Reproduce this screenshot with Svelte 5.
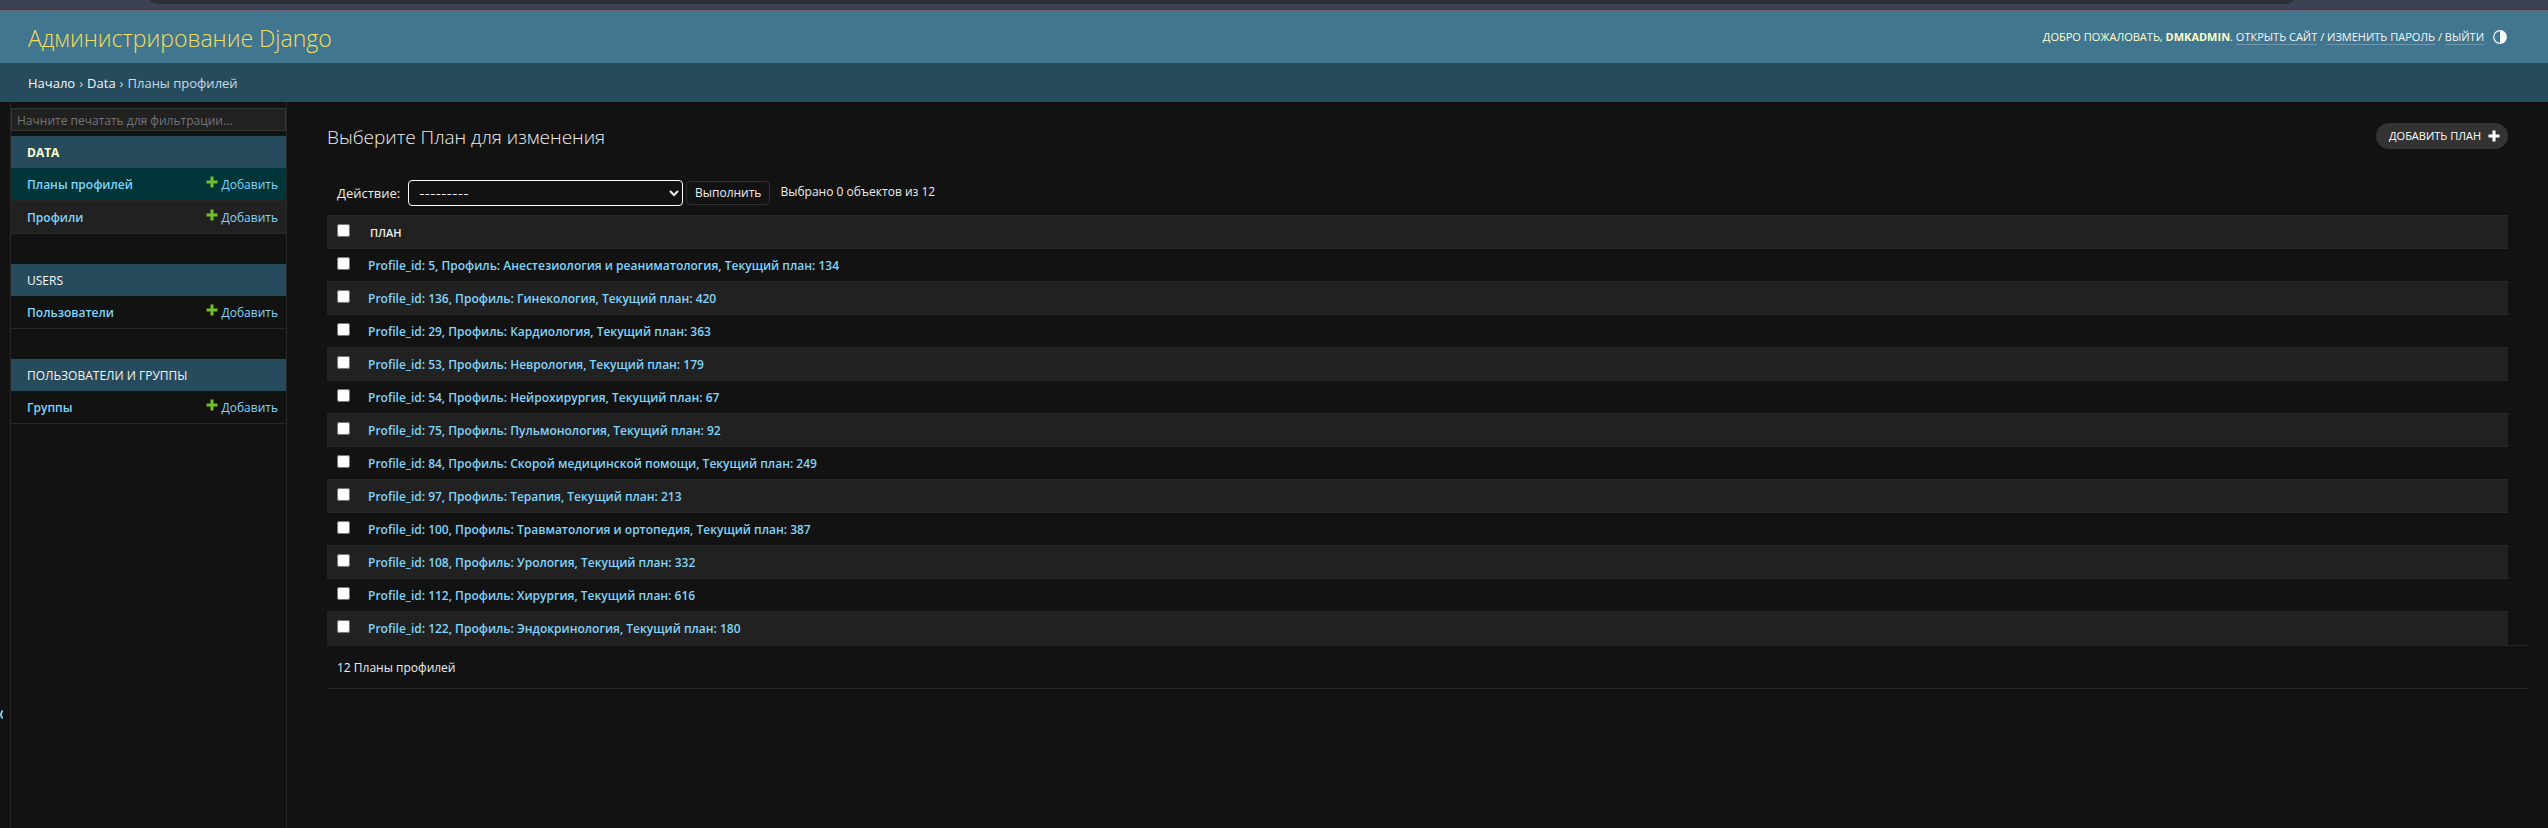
<script>
  const apps = [
    { name: 'Data', current: true, models: [
      { name: 'Планы профилей', current: true },
      { name: 'Профили', current: false }
    ] },
    { name: 'Users', current: false, models: [{ name: 'Пользователи', current: false }] },
    { name: 'Пользователи и группы', current: false, models: [{ name: 'Группы', current: false }] }
  ];

  const plans = [
    [5, 'Анестезиология и реаниматология', 134],
    [136, 'Гинекология', 420],
    [29, 'Кардиология', 363],
    [53, 'Неврология', 179],
    [54, 'Нейрохирургия', 67],
    [75, 'Пульмонология', 92],
    [84, 'Скорой медицинской помощи', 249],
    [97, 'Терапия', 213],
    [100, 'Травматология и ортопедия', 387],
    [108, 'Урология', 332],
    [112, 'Хирургия', 616],
    [122, 'Эндокринология', 180]
  ].map(([id, profile, value]) => ({ id, profile, value }));

  let chosen = $state([]);
  let allChosen = $derived(chosen.length === plans.length);

  function toggleAll() {
    chosen = allChosen ? [] : plans.map((p) => p.id);
  }
</script>

{#snippet plus()}
  <svg class="plus" viewBox="0 0 12 12" aria-hidden="true">
    <path d="M4.5 0.5h3v4h4v3h-4v4h-3v-4h-4v-3h4z" fill="currentColor" />
  </svg>
{/snippet}

<div class="page">
  <div class="window-edge"><div class="address"></div></div>

  <header>
    <a class="site-name" href="#home">Администрирование Django</a>
    <div class="user-tools">
      <span>Добро пожаловать, <strong>dmkadmin</strong>.
        <a href="#site">Открыть сайт</a> /
        <a href="#password">Изменить пароль</a> /
        <a href="#logout">Выйти</a></span>
      <button class="theme" aria-label="Переключить тему">
        <svg viewBox="0 0 14 14" aria-hidden="true">
          <circle cx="7" cy="7" r="6.3" fill="none" stroke="currentColor" stroke-width="1.2" />
          <path d="M7 0.7a6.3 6.3 0 0 1 0 12.6z" fill="currentColor" />
        </svg>
      </button>
    </div>
  </header>

  <nav class="breadcrumbs">
    <a href="#home">Начало</a><span>›</span><a href="#data">Data</a><span>›</span>Планы профилей
  </nav>

  <div class="body">
    <button class="collapse" aria-label="Свернуть навигацию">
      <svg viewBox="0 0 3 9" aria-hidden="true"><path d="M2.8 0.5Q-0.9 4.5 2.8 8.5" fill="none" stroke="currentColor" stroke-width="1.8" /></svg>
    </button>
    <nav class="sidebar">
      <input type="search" class="filter" placeholder="Начните печатать для фильтрации..." aria-label="Фильтр" />
      {#each apps as app}
        <table class="app" class:current={app.current}>
          <caption><a href="#app">{app.name}</a></caption>
          <tbody>
            {#each app.models as model}
              <tr class:active={model.current}>
                <th scope="row"><a href="#model">{model.name}</a></th>
                <td><a class="add" href="#add">{@render plus()}Добавить</a></td>
              </tr>
            {/each}
          </tbody>
        </table>
      {/each}
    </nav>

    <main>
      <div class="title">
        <h1>Выберите План для изменения</h1>
        <a class="add-plan" href="#add">Добавить план {@render plus()}</a>
      </div>

      <div class="actions">
        <label for="action">Действие:</label>
        <select id="action"><option>---------</option></select>
        <button class="run">Выполнить</button>
        <span class="counter">Выбрано {chosen.length} объектов из {plans.length}</span>
      </div>

      <table class="results">
        <thead>
          <tr>
            <th class="check"><input type="checkbox" aria-label="Выбрать все" checked={allChosen} onchange={toggleAll} /></th>
            <th class="column" scope="col">План</th>
          </tr>
        </thead>
        <tbody>
          {#each plans as plan (plan.id)}
            <tr>
              <td class="check"><input type="checkbox" aria-label={plan.profile} value={plan.id} bind:group={chosen} /></td>
              <th scope="row"><a href="#plan">Profile_id: {plan.id}, Профиль: {plan.profile}, Текущий план: {plan.value}</a></th>
            </tr>
          {/each}
        </tbody>
      </table>

      <p class="paginator">{plans.length} Планы профилей</p>
    </main>
  </div>
</div>

<style>
  :global(body) {
    margin: 0;
    background: #121212;
  }

  .page {
    display: flex;
    flex-direction: column;
    min-height: 100vh;
    color: #eee;
    font: 12px/20px 'Segoe UI', 'Open Sans', 'Noto Sans', sans-serif;
  }

  .page * {
    box-sizing: border-box;
  }

  a {
    color: #81d4fa;
    text-decoration: none;
  }

  button,
  input,
  select {
    font: inherit;
  }

  .window-edge {
    height: 11px;
    padding: 0 254px 0 150px;
    background: #3c4252;
    border-bottom: 1px solid #6b6678;
  }

  .address {
    height: 4px;
    background: #2c2e38;
    border-radius: 0 0 12px 12px / 0 0 4px 4px;
  }

  header {
    display: flex;
    justify-content: space-between;
    align-items: center;
    height: 52px;
    padding: 0 41px 0 28px;
    background: #417690;
  }

  .site-name {
    padding-top: 2px;
    color: #f5dd5d;
    font-size: 23px;
    font-weight: 300;
    line-height: 30px;
  }

  .user-tools {
    display: flex;
    align-items: center;
    gap: 9px;
    color: #ffc;
    font-size: 11px;
    line-height: 14px;
    text-transform: uppercase;
  }

  .user-tools a {
    color: #f7f7f7;
    border-bottom: 1px solid rgba(255, 255, 255, 0.25);
  }

  .theme {
    display: flex;
    padding: 0;
    background: none;
    border: 0;
    color: #f7f7f7;
  }

  .theme svg {
    width: 14px;
    height: 14px;
  }

  .breadcrumbs {
    display: flex;
    gap: 4px;
    padding: 10px 28px 9px;
    background: #264b5d;
    color: #c4dce8;
    font-size: 13px;
  }

  .breadcrumbs a {
    color: #f7f7f7;
  }

  .body {
    position: relative;
    display: flex;
    flex: 1;
    padding-left: 10px;
  }

  .collapse {
    position: absolute;
    top: 608px;
    left: 0;
    display: flex;
    padding: 0;
    background: none;
    border: 0;
    color: #81d4fa;
  }

  .collapse svg {
    width: 3px;
    height: 9px;
  }

  .sidebar {
    flex: 0 0 277px;
    padding-top: 6px;
    border: solid #272727;
    border-width: 0 1px;
  }

  .filter {
    display: block;
    width: 100%;
    height: 23px;
    margin-bottom: 5px;
    padding: 2px 5px 0;
    background: #212121;
    border: 1px solid #353535;
    border-radius: 0;
    color: #eee;
    appearance: none;
  }

  .filter::placeholder {
    color: #757575;
  }

  table {
    width: 100%;
    border-collapse: collapse;
  }

  .app {
    margin-bottom: 30px;
    border-collapse: separate;
    border-spacing: 0;
  }

  caption {
    height: 32px;
    padding: 7px 16px 5px;
    background: #264b5d;
    text-align: left;
    text-transform: uppercase;
  }

  caption a {
    color: #f7f7f7;
  }

  .current caption {
    font-weight: 700;
  }

  .current caption a {
    color: #ffc;
  }

  .app tr:nth-child(even) {
    background: #212121;
  }

  .app tr.active {
    background: #00363a;
  }

  th,
  td {
    padding: 2px 0 0;
    text-align: left;
    font-weight: 600;
  }

  .app th,
  .app td {
    height: 33px;
    border-bottom: 1px solid #272727;
  }

  .app th {
    padding-left: 16px;
  }

  .app td {
    padding-right: 8px;
    text-align: right;
    font-weight: 400;
  }

  .plus {
    width: 12px;
    height: 12px;
  }

  .add .plus {
    margin: 0 4px 1px 0;
    color: #70bf2b;
  }

  main {
    flex: 1;
    min-width: 0;
    padding: 20px 20px 40px 40px;
  }

  .title {
    display: flex;
    justify-content: space-between;
    align-items: center;
    margin: 0 20px 30px 0;
  }

  h1 {
    margin: 0;
    padding-top: 2px;
    font-size: 19px;
    font-weight: 300;
    line-height: 26px;
  }

  .add-plan {
    display: flex;
    align-items: center;
    gap: 7px;
    padding: 3px 8px 3px 13px;
    background: #333;
    border-radius: 13px;
    color: #fff;
    font-size: 11px;
    text-transform: uppercase;
  }

  .actions {
    display: flex;
    align-items: center;
    margin-bottom: 9px;
    padding-left: 10px;
  }

  label {
    width: 71px;
    font-size: 13px;
  }

  select {
    width: 275px;
    height: 26px;
    padding: 0 6px;
    background: #121212;
    border: 1px solid #fff;
    border-radius: 4px;
    color: #eee;
    font-family: Inter, sans-serif;
  }

  .run {
    height: 24px;
    margin: 0 10px 0 3px;
    padding: 1px 8px;
    background: #121212;
    border: 1px solid #303030;
    border-radius: 4px;
    color: #eee;
    line-height: 20px;
  }

  .counter {
    padding-bottom: 2px;
  }

  .results {
    width: calc(100% - 20px);
  }

  .results tr {
    height: 33px;
    border-top: 1px solid #272727;
  }

  .results tbody tr:nth-child(even),
  .results thead tr {
    background: #212121;
  }

  .results .check {
    width: 41px;
    padding: 8px 0 0 10px;
    vertical-align: top;
  }

  .check input {
    display: block;
    width: 13px;
    height: 13px;
    margin: 0;
  }

  .column {
    padding-left: 2px;
    font-size: 11px;
    text-transform: uppercase;
  }

  .paginator {
    margin: 0;
    padding: 12px 10px 10px;
    border: solid #272727;
    border-width: 1px 0;
  }
</style>
